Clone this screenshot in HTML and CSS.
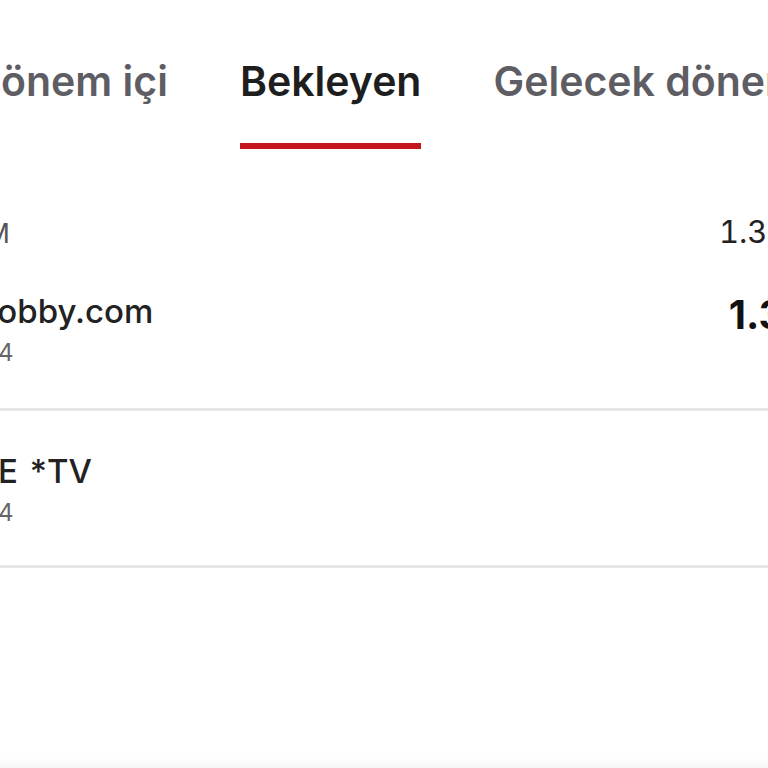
FILE: index.html
```html
<!DOCTYPE html>
<html lang="tr">
<head>
    <meta charset="UTF-8">
    <meta name="viewport" content="width=device-width, initial-scale=1.0">
    <title>Bekleyen işlemler</title>
    <link rel="stylesheet" href="styles.css">
</head>
<body>
    <div class="screen">
        <!-- Sekmeler -->
        <nav class="tabs">
            <a class="tab">Bu dönem içi</a>
            <a class="tab active">Bekleyen</a>
            <a class="tab">Gelecek dönem</a>
        </nav>

        <div class="list">
            <div class="summary">
                <span class="summary-label">TOPLAM</span>
                <span class="summary-amount">1.349,90 TL</span>
            </div>

            <div class="item">
                <div class="info">
                    <div class="name">Hepsihobby.com</div>
                    <div class="date">12.03.2024</div>
                </div>
                <div class="amount">1.349,90</div>
            </div>

            <div class="item">
                <div class="info">
                    <div class="name">HUBBLE *TV</div>
                    <div class="date">10.03.2024</div>
                </div>
                <div class="amount">99,99</div>
            </div>
        </div>

        <div class="bottom-bar"></div>
    </div>
</body>
</html>
```
FILE: styles.css
```css
* {
    margin: 0;
    padding: 0;
    box-sizing: border-box;
}

body {
    font-family: 'Inter', 'Noto Sans', sans-serif;
    background: #fff;
    color: #1f1f1f;
    width: 768px;
    height: 768px;
    overflow: hidden;
}

.screen {
    width: 768px;
    height: 768px;
    display: flex;
    flex-direction: column;
}

/* Sekmeler (yatay kaydırılmış) */
.tabs {
    display: flex;
    gap: 72px;
    padding-top: 57px;
    margin-left: -87px;
}

.tab {
    flex: none;
    font-size: 41px;
    font-weight: 600;
    line-height: 48px;
    color: #5d5d63;
    padding-bottom: 38px;
    border-bottom: 6px solid transparent;
    white-space: nowrap;
}

.tab.active {
    color: #1e1e1e;
    border-bottom-color: #c4161c;
}

/* Liste - ekranın kenarlarından taşıyor */
.list {
    display: flex;
    flex-direction: column;
    margin-left: -113px;
    margin-right: -134px;
}

.summary {
    display: flex;
    justify-content: space-between;
    align-items: baseline;
    margin-top: 64px;
    height: 36px;
}

.summary-label {
    font-size: 27px;
    letter-spacing: 2px;
    color: #555;
}

.summary-amount {
    font-size: 31px;
    font-weight: 400;
    font-variant-numeric: tabular-nums;
    color: #222;
}

.item {
    display: flex;
    justify-content: space-between;
    padding: 42px 0 40px;
    border-bottom: 3px solid #e6e6e6;
}

.item + .item {
    padding: 40px 0 37px;
}

.name {
    font-size: 33px;
    font-weight: 500;
    line-height: 40px;
    word-spacing: 3px;
    color: #222;
    white-space: nowrap;
}

.date {
    font-size: 24px;
    line-height: 30px;
    color: #666;
    margin-top: 7px;
}

.amount {
    font-size: 40px;
    font-weight: 700;
    line-height: 48px;
    color: #111;
}

.bottom-bar {
    margin-top: auto;
    height: 10px;
    background: linear-gradient(to bottom, #fff, #f5f5f5);
}
```
